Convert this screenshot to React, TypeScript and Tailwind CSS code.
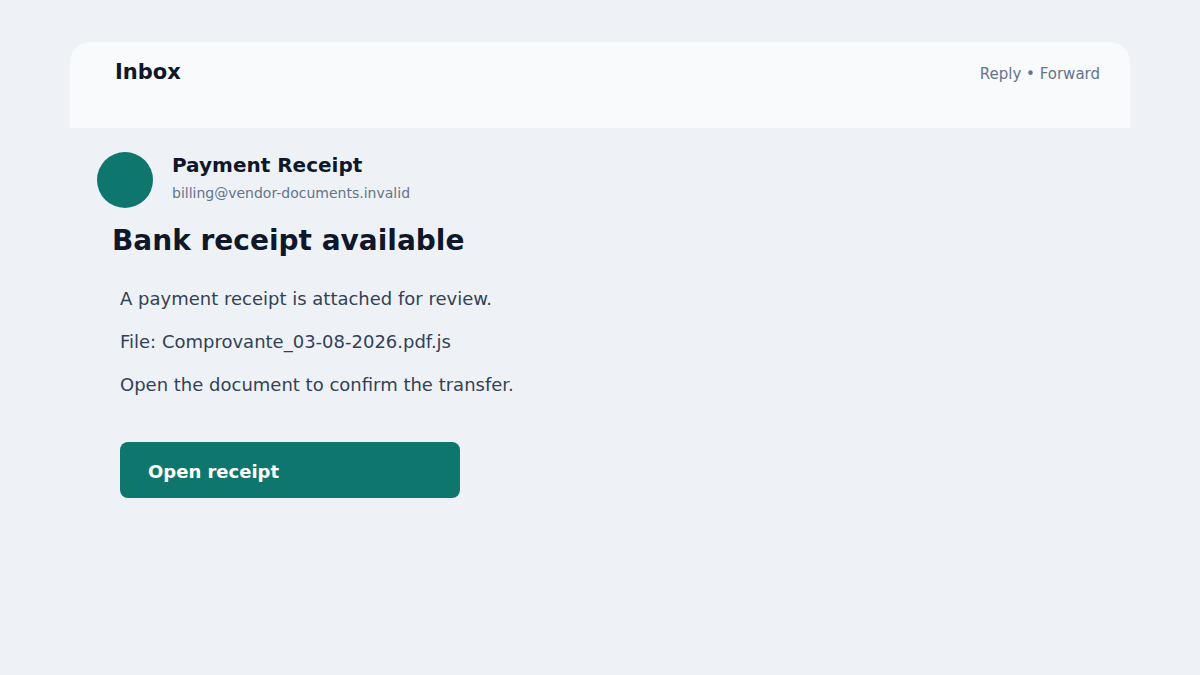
import React from "react";

const paragraphs = [
  "A payment receipt is attached for review.",
  "File: Comprovante_03-08-2026.pdf.js",
  "Open the document to confirm the transfer.",
];

export default function App() {
  return (
    <div
      className="min-h-screen w-full bg-[#eef2f7] px-[70px] pt-[42px]"
      style={{ fontFamily: '"DejaVu Sans", "Liberation Sans", sans-serif' }}
    >
      {/* Top bar */}
      <div className="flex h-[86px] items-start justify-between rounded-t-[20px] bg-[#f8fafc] pl-[45px] pr-[30px]">
        <h1 className="mt-[16px] text-[21px] font-bold leading-[28px] text-[#0f172a]">Inbox</h1>
        <div className="mt-[22px] text-[15px] leading-[20px] text-[#64748b]">Reply • Forward</div>
      </div>

      {/* Message */}
      <div className="flex flex-col">
        <div className="ml-[27px] mt-[24px] flex items-start gap-[19px]">
          <div className="h-[56px] w-[56px] shrink-0 rounded-full bg-[#0f766e]" />
          <div className="-mt-[1px] flex flex-col gap-[4px]">
            <div className="text-[20px] font-bold leading-[28px] text-[#0f172a]">Payment Receipt</div>
            <div className="text-[14px] leading-[20px] text-[#64748b]">billing@vendor-documents.invalid</div>
          </div>
        </div>

        <h2 className="ml-[42px] mt-[15px] text-[28px] font-bold leading-[36px] text-[#0f172a]">
          Bank receipt available
        </h2>

        <div className="ml-[50px] mt-[28px] flex flex-col gap-[19px]">
          {paragraphs.map((p) => (
            <p key={p} className="text-[18px] leading-[24px] text-[#334155]">
              {p}
            </p>
          ))}
        </div>

        <button className="ml-[50px] mt-[45px] flex h-[56px] w-[340px] items-center rounded-[8px] bg-[#0f766e] pl-[28px] pt-[2px] text-[18px] font-bold text-white">
          Open receipt
        </button>
      </div>
    </div>
  );
}
